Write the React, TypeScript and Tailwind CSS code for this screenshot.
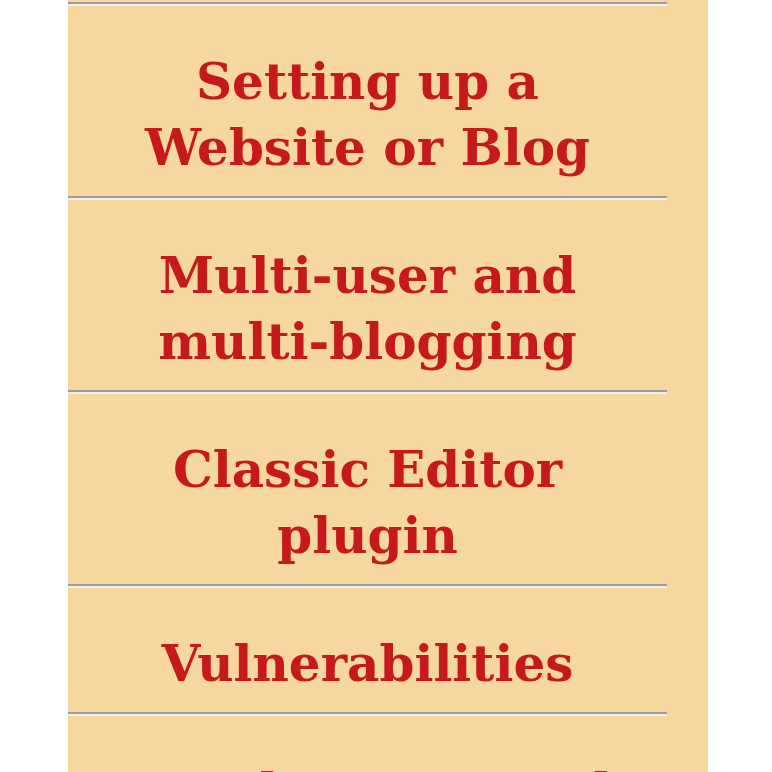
const topics = [
  ['Setting up a', 'Website or Blog'],
  ['Multi-user and', 'multi-blogging'],
  ['Classic Editor', 'plugin'],
  ['Vulnerabilities'],
  ['Development and', 'support'],
]

export default function App() {
  return (
    <div className="min-h-[772px] bg-white">
      <div className="ml-[68px] h-[772px] w-[640px] overflow-hidden bg-[#f7d7a0] pt-[2px]">
        <ul className="w-[599px]">
          {topics.map((lines) => (
            <li key={lines[0]}>
              <div className="h-[4px] border-t-2 border-b-2 border-t-[#9d9d9d] border-b-[#eeeeee]" />
              <div className="pt-[43px] pb-[15px] text-center font-['DejaVu_Serif',serif] text-[50px] leading-[66px] font-bold text-[#c5191c]">
                {lines.map((l) => (
                  <div key={l}>{l}</div>
                ))}
              </div>
            </li>
          ))}
        </ul>
      </div>
    </div>
  )
}
